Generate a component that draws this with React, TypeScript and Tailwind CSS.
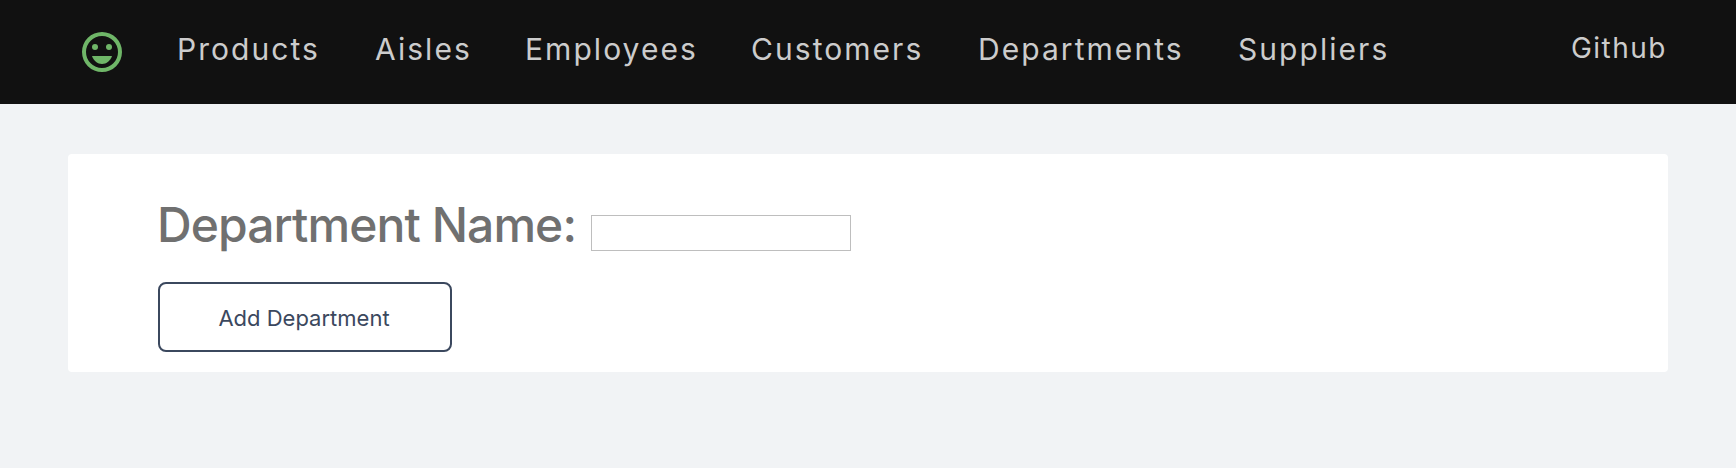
const links = [
  { label: 'Products', cls: 'w-[198px]' },
  { label: 'Aisles', cls: 'w-[150px]' },
  { label: 'Employees', cls: 'w-[226px]' },
  { label: 'Customers', cls: 'w-[227px]' },
  { label: 'Departments', cls: 'w-[260px]' },
  { label: 'Suppliers', cls: 'w-[200px]' },
];

function SmileIcon() {
  return (
    <svg viewBox="0 0 24 24" className="size-12 fill-[#6fb668]" aria-hidden="true">
      <path
        fillRule="evenodd"
        d="M12 2a10 10 0 1 0 0 20 10 10 0 0 0 0-20zm0 18a8 8 0 1 1 0-16 8 8 0 0 1 0 16z"
      />
      <circle cx="8.5" cy="9.5" r="1.5" />
      <circle cx="15.5" cy="9.5" r="1.5" />
      <path d="M12 18c2.28 0 4.22-1.66 5-4H7c.78 2.34 2.72 4 5 4z" />
    </svg>
  );
}

export default function App() {
  return (
    <div className="min-h-[468px] bg-[#f1f3f5] font-['Inter',sans-serif]">
      <nav className="flex h-[104px] items-start bg-[#111] pl-[78px] pr-[69px] text-[#ccc]">
        <a href="#" className="mt-7 mr-[51px] shrink-0">
          <SmileIcon />
        </a>
        <ul className="mt-[31px] flex text-[30px] leading-9 tracking-[2.05px]">
          {links.map((l) => (
            <li key={l.label} className={l.cls}>
              <a href="#">{l.label}</a>
            </li>
          ))}
        </ul>
        <a href="#" className="mt-[30px] ml-auto text-[28px] leading-9 tracking-[1.5px]">
          Github
        </a>
      </nav>
      <main className="mx-[68px] mt-[50px] h-[218px] rounded-[4px] bg-white pt-[42px] pl-[90px]">
        <div className="flex h-[58px] items-start">
          <label
            htmlFor="name"
            className="-ml-px w-[434px] whitespace-nowrap text-[48px] font-medium leading-[58px] tracking-[-0.92px] text-[#707070]"
          >
            Department Name:
          </label>
          <input
            id="name"
            className="mt-[19px] h-9 w-[260px] border border-[#bebebe] bg-white px-2 text-xl outline-none"
          />
        </div>
        <button className="mt-[28px] h-[70px] w-[294px] rounded-[8px] border-2 border-[#3b485e] pt-0.5 pr-0.5 text-[22px] text-[#3b485e]">
          Add Department
        </button>
      </main>
    </div>
  );
}
